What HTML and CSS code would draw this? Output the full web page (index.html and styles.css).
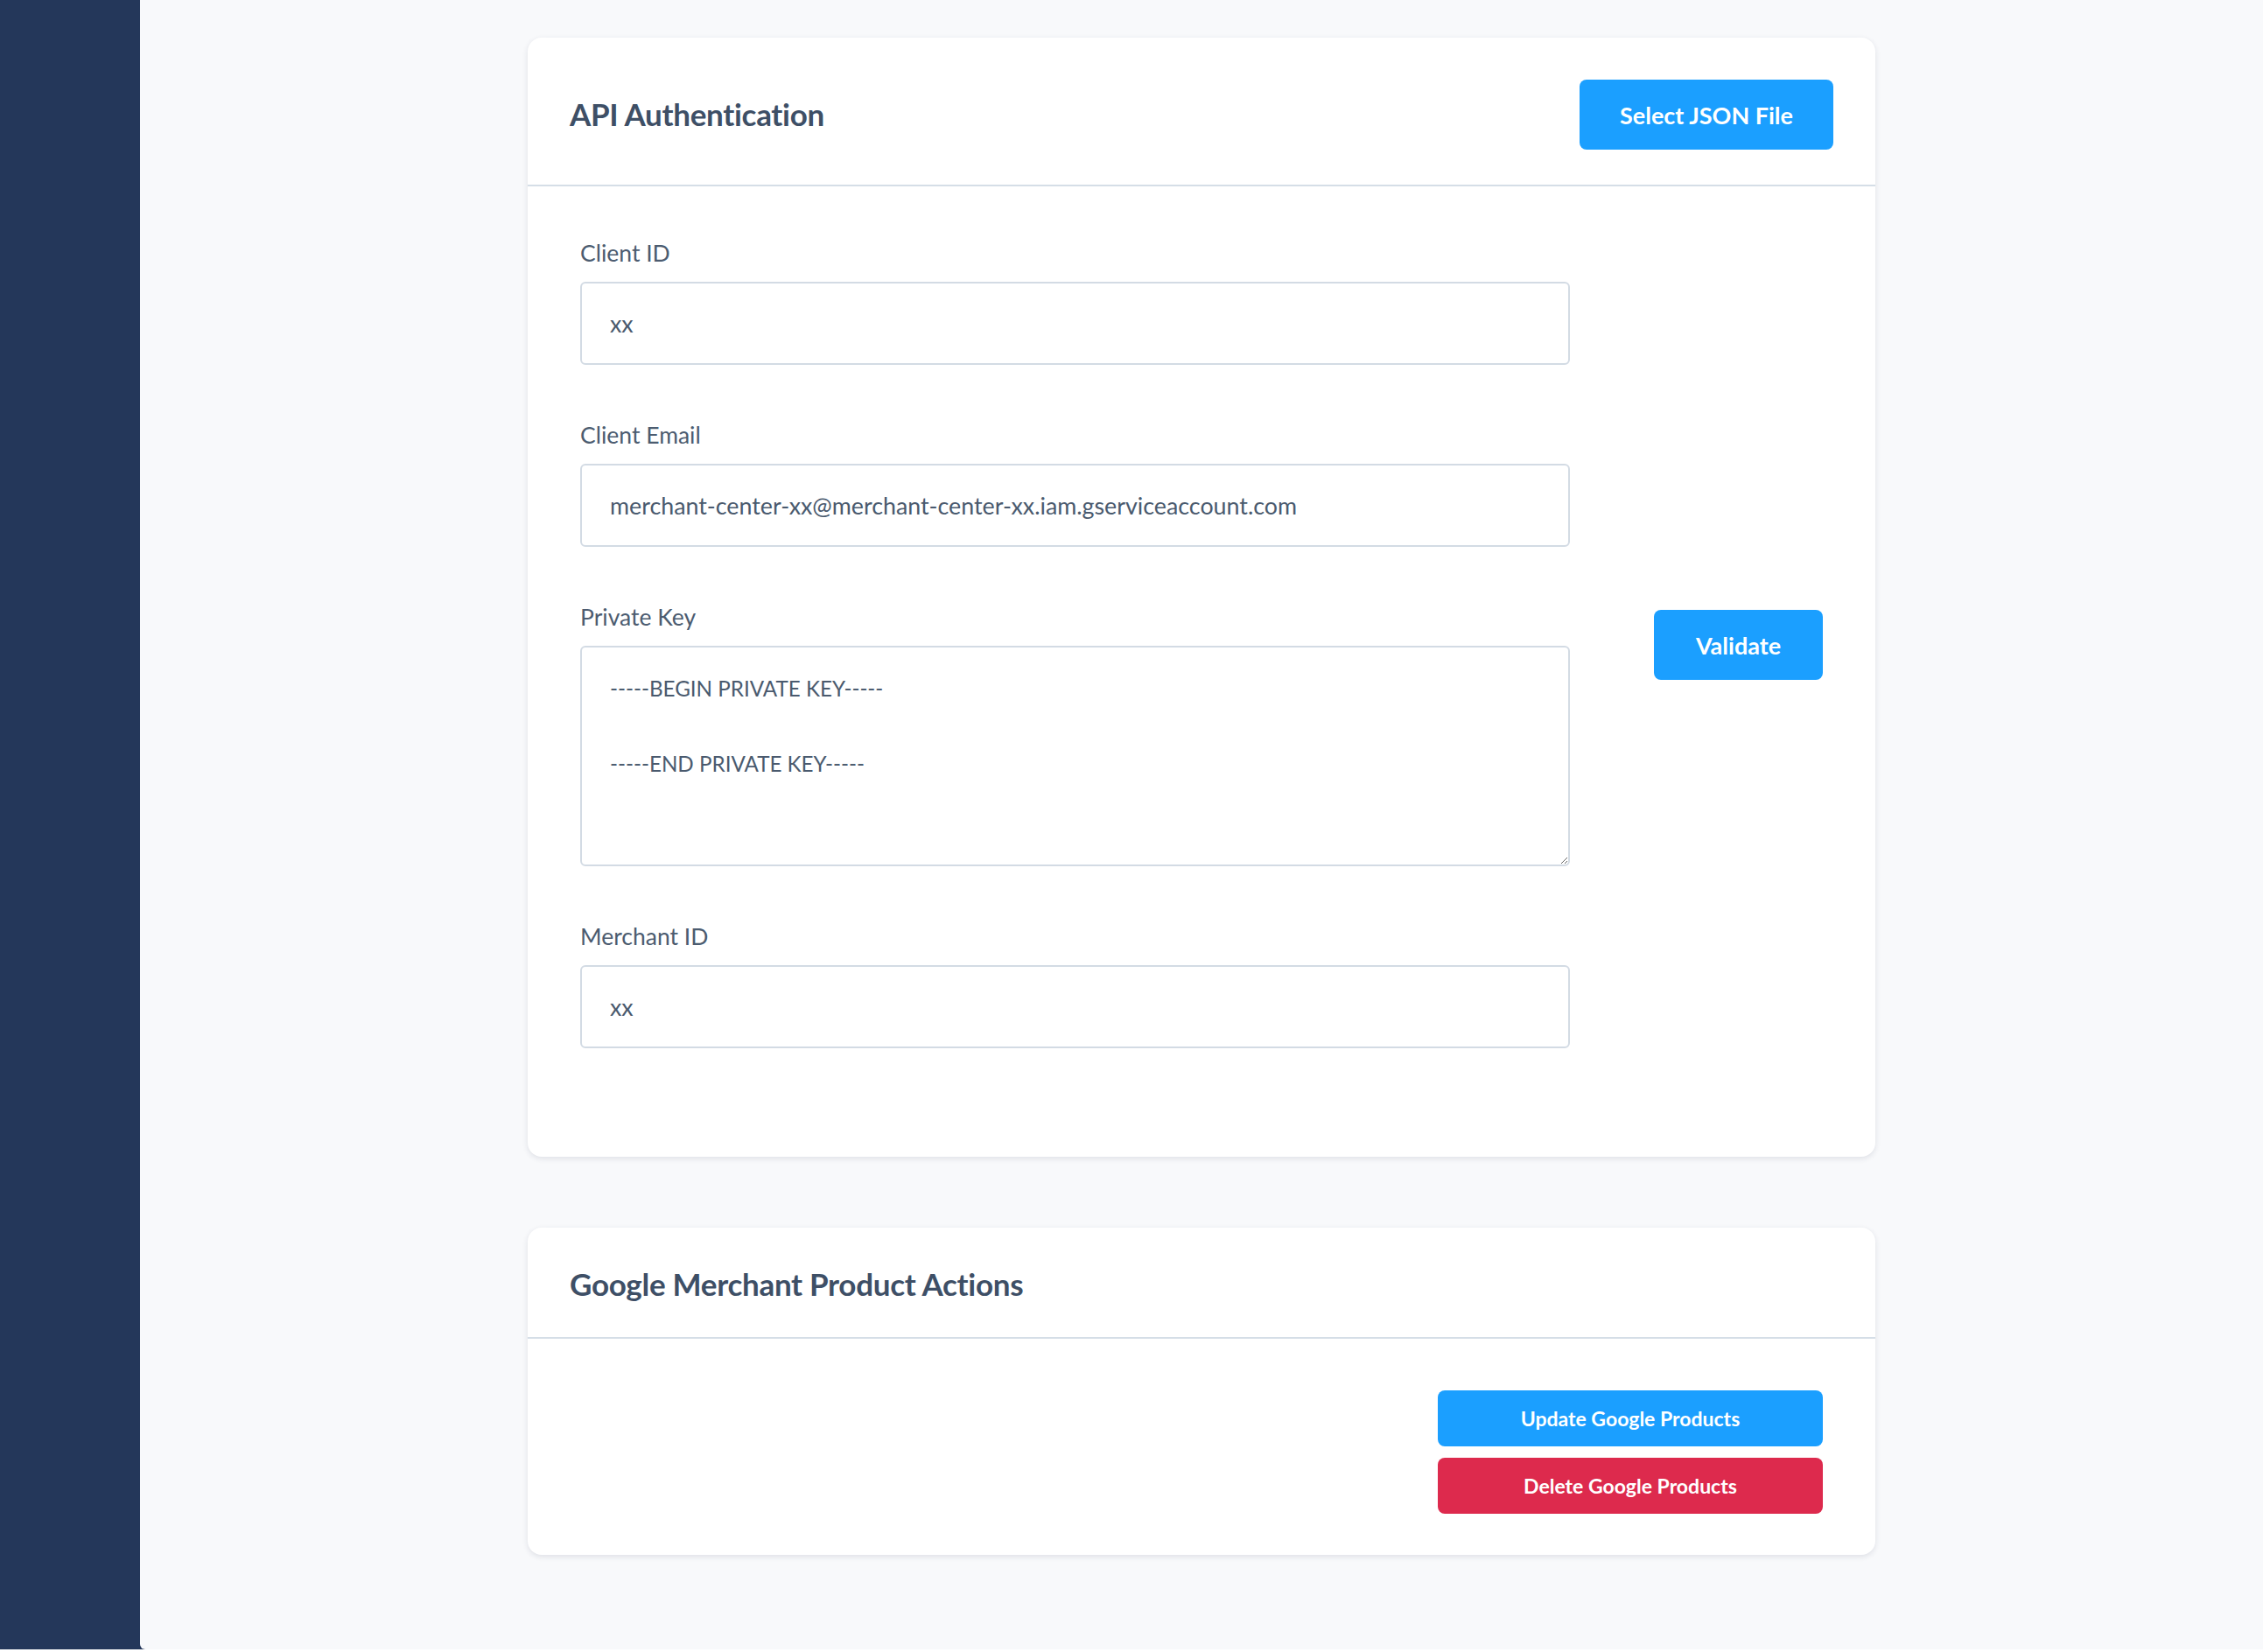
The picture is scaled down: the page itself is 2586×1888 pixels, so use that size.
FILE: index.html
```html
<!DOCTYPE html>
<html>
<head>
<meta charset="utf-8">
<link rel="stylesheet" href="styles.css">
</head>
<body>
<div class="layout">
  <aside class="sidebar"></aside>
  <main class="main">
    <div class="container">
      <section class="card">
        <header class="card-header">
          <h2 class="card-title">API Authentication</h2>
          <button class="btn btn-primary btn-lg">Select JSON File</button>
        </header>
        <div class="card-body auth-body">
          <div class="form">
            <div class="form-group">
              <label class="form-label">Client ID</label>
              <input class="form-input" type="text" value="xx">
            </div>
            <div class="form-group">
              <label class="form-label">Client Email</label>
              <input class="form-input" type="text" value="merchant-center-xx@merchant-center-xx.iam.gserviceaccount.com">
            </div>
            <div class="form-group">
              <label class="form-label">Private Key</label>
              <textarea class="form-textarea">-----BEGIN PRIVATE KEY-----

-----END PRIVATE KEY-----</textarea>
            </div>
            <div class="form-group">
              <label class="form-label">Merchant ID</label>
              <input class="form-input" type="text" value="xx">
            </div>
          </div>
          <div class="side-actions">
            <button class="btn btn-primary btn-lg btn-validate">Validate</button>
          </div>
        </div>
      </section>

      <section class="card card-actions">
        <header class="card-header card-header-sm">
          <h2 class="card-title">Google Merchant Product Actions</h2>
        </header>
        <div class="card-body actions-body">
          <div class="action-stack">
            <button class="btn btn-primary btn-md">Update Google Products</button>
            <button class="btn btn-danger btn-md">Delete Google Products</button>
          </div>
        </div>
      </section>
    </div>
  </main>
</div>
</body>
</html>
```

FILE: styles.css
```css
* { box-sizing: border-box; }

html, body {
  margin: 0;
  padding: 0;
  background: #ffffff;
  font-family: "Lato", "Noto Sans", sans-serif;
}

.layout {
  display: flex;
  height: 1885px;
  background: #24375a;
}

.sidebar {
  width: 160px;
  flex: 0 0 160px;
  background: #24375a;
}

.main {
  flex: 1;
  background: #f8f9fb;
  border-bottom-left-radius: 6px;
  padding-top: 43px;
}

.container {
  width: 1540px;
  margin: 0 auto;
  display: flex;
  flex-direction: column;
  gap: 81px;
}

.card {
  background: #ffffff;
  border-radius: 16px;
  box-shadow: 0 2px 6px rgba(30, 45, 70, 0.12);
}

.card-header {
  height: 170px;
  padding: 0 48px;
  display: flex;
  align-items: center;
  justify-content: space-between;
  border-bottom: 2px solid #d5dee7;
}

.card-header .card-title {
  padding-top: 6px;
}

.card-header-sm {
  height: 127px;
}

.card-header-sm .card-title {
  padding-top: 3px;
}

.card-title {
  margin: 0;
  font-size: 35px;
  font-weight: 700;
  color: #3e4f66;
  letter-spacing: -0.3px;
}

.btn {
  border: none;
  border-radius: 8px;
  color: #ffffff;
  font-family: inherit;
  font-weight: 700;
  cursor: pointer;
}

.btn-primary { background: #1b9fff; }
.btn-danger { background: #dd2a4d; }

.btn-lg {
  height: 80px;
  font-size: 27px;
  padding: 0 46px;
  margin-top: 8px;
}

.btn-validate {
  width: 193px;
  padding: 0;
  margin-top: 0;
}

.btn-md {
  width: 440px;
  height: 64px;
  font-size: 23px;
}

.auth-body {
  display: grid;
  grid-template-columns: 1131px 1fr;
  padding: 57px 60px 124px;
}

.side-actions {
  align-self: center;
  justify-self: end;
  margin-top: 6px;
}

.form-group {
  display: flex;
  flex-direction: column;
  margin-bottom: 61px;
}

.form-group:last-child {
  margin-bottom: 0;
}

.form-label {
  height: 38px;
  line-height: 38px;
  margin-bottom: 14px;
  font-size: 26.5px;
  color: #4c5c70;
}

.form-input,
.form-textarea {
  width: 100%;
  border: 2px solid #d3dbe4;
  border-radius: 6px;
  background: #ffffff;
  font-family: inherit;
  font-size: 26.8px;
  color: #4a5a6e;
  padding: 0 32px;
  outline: none;
}

.form-input {
  height: 95px;
}

.form-textarea {
  height: 252px;
  font-size: 24.2px;
  line-height: 43px;
  padding-top: 25px;
  resize: vertical;
}

.actions-body {
  display: flex;
  justify-content: flex-end;
  padding: 59px 60px 47px;
}

.action-stack {
  display: flex;
  flex-direction: column;
  gap: 13px;
}
```
